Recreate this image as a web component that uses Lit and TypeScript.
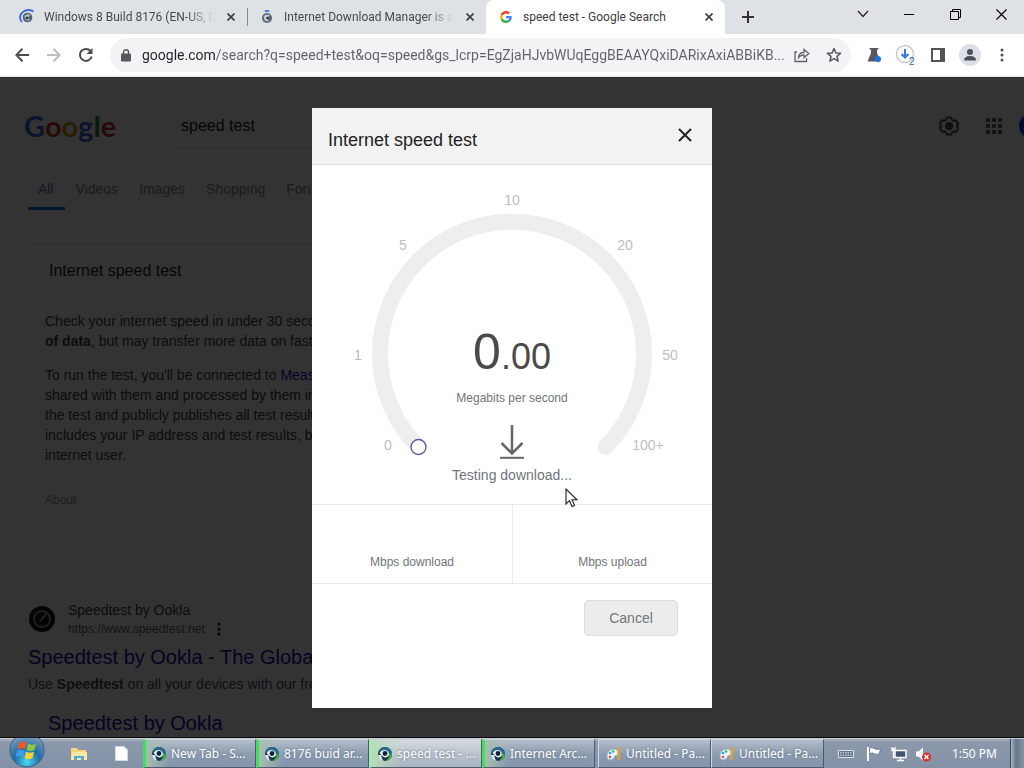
import { LitElement, html, css, svg, nothing } from "lit";
import { customElement, property } from "lit/decorators.js";
import { classMap } from "lit/directives/class-map.js";

const idmIcon = html`<svg width="16" height="16" viewBox="0 0 16 16" aria-hidden="true">
  <path d="M3 13A6.500 6.500 0 0 1 4 3Q8 -0.500 14.500 2.500" fill="none" stroke="#3b74d8" stroke-width="2"/>
  <circle cx="8.500" cy="8.500" r="4.800" fill="#56616e"/>
  <path d="M5.500 7Q8 4 11.500 6L9 8.500L11 11Q8 13 6 10Z" fill="#b9c3cc"/>
  <circle cx="8" cy="9" r="1.500" fill="#2f3a46"/>
</svg>`;

const globeIcon = html`<svg width="16" height="16" viewBox="0 0 16 16" aria-hidden="true">
  <rect x="5.500" y="1" width="5" height="2" rx="1" fill="#4b82d8"/>
  <circle cx="8" cy="9" r="5" fill="#5a6470"/>
  <path d="M4.500 8Q7 4 11 6.500L8 9L10 12Q7 13 5.500 11Z" fill="#c3cbd3"/>
  <circle cx="8.500" cy="9" r="1.300" fill="#2f3a46"/>
</svg>`;

const googleIcon = html`<svg width="12" height="12" viewBox="0 0 48 48" aria-hidden="true">
  <path fill="#ea4335" d="M24 9.500c3.540 0 6.710 1.220 9.210 3.600l6.850-6.850C35.900 2.380 30.470 0 24 0 14.620 0 6.510 5.380 2.560 13.220l7.980 6.190C12.430 13.720 17.740 9.500 24 9.500z"/>
  <path fill="#4285f4" d="M46.980 24.550c0-1.570-.15-3.090-.38-4.550H24v9.020h12.940c-.58 2.960-2.260 5.480-4.780 7.180l7.730 6c4.510-4.180 7.090-10.360 7.090-17.650z"/>
  <path fill="#fbbc05" d="M10.530 28.590c-.48-1.450-.76-2.990-.76-4.590s.27-3.140.76-4.590l-7.980-6.190C.92 16.460 0 20.120 0 24c0 3.880.92 7.540 2.560 10.780l7.970-6.190z"/>
  <path fill="#34a853" d="M24 48c6.480 0 11.930-2.130 15.890-5.810l-7.730-6c-2.150 1.450-4.920 2.300-8.160 2.300-6.260 0-11.570-4.220-13.470-9.910l-7.980 6.190C6.510 42.620 14.620 48 24 48z"/>
</svg>`;

const swirlIcon = html`<svg width="16" height="16" viewBox="0 0 16 16" aria-hidden="true">
  <circle cx="8" cy="8" r="7" fill="#17364a"/>
  <path d="M8 1A7 7 0 0 0 1 8Q2 5 6 5Q12 6 12 12L14 11.500A7 7 0 0 0 8 1Z" fill="#2c6a8f"/>
  <path d="M1 9A7 7 0 0 0 7 15Q4 12.500 4.500 9Z" fill="#dfeaf0"/>
  <path d="M15 8.500A7 7 0 0 1 8 15Q13 12 12 7.500Z" fill="#3fae3a"/>
  <path d="M2.500 7Q5 3 9.500 4.500Q13 6.500 11.500 10Q8.500 12.500 6 10.500Q4 8.500 2.500 7Z" fill="#e8f1f5"/>
  <circle cx="8" cy="7.500" r="2.400" fill="#112233"/>
</svg>`;

const paintIcon = html`<svg width="16" height="16" viewBox="0 0 16 16" aria-hidden="true">
  <path d="M1 12Q0 4 7 3Q13 3 12 8Q11 10 9 10Q8 13 5 14Q2 14 1 12Z" fill="#e9f2f8" stroke="#8fb3cb" stroke-width="1"/>
  <circle cx="4" cy="7" r="1.300" fill="#3a9bdc"/><circle cx="7" cy="5.500" r="1.300" fill="#4db052"/>
  <circle cx="4" cy="11" r="1.300" fill="#dd4b3a"/>
  <path d="M12 1L14.500 1.500L13.500 14L11.500 14Z" fill="#e6a02c"/>
</svg>`;

@customElement("browser-tab")
export class BrowserTab extends LitElement {
  @property() label = "";
  @property({ type: Boolean, reflect: true }) active = false;
  @property({ attribute: false }) icon: unknown = nothing;

  static styles = css`
    :host { display: block; min-width: 0; }
    .tab {
      box-sizing: border-box; height: 34px; display: flex; align-items: center;
      padding: 0 7px 0 18px; gap: 8px; color: #45494e;
      font: 12px/16px Roboto, sans-serif;
    }
    .tab.active { background: #fff; border-radius: 8px 8px 0 0; padding-left: 11px; color: #3c4043; }
    .mark { display: grid; place-items: center; width: 18px; height: 16px; flex: none; }
    .label { flex: 1; min-width: 0; overflow: hidden; white-space: nowrap; }
    .label.faded { mask-image: linear-gradient(to right, #000 calc(100% - 28px), transparent); }
    .close { border: 0; background: none; padding: 0; width: 18px; height: 18px; display: grid; place-items: center; flex: none; }
  `;

  render() {
    return html`<div class=${classMap({ tab: true, active: this.active })}>
      <span class="mark">${this.icon}</span>
      <span class=${classMap({ label: true, faded: !this.active })}>${this.label}</span>
      <button class="close" aria-label="Close tab">
        <svg width="8" height="8" viewBox="0 0 8 8"><path d="M.5.5l7 7M7.500.5l-7 7" stroke="#3c4043" stroke-width="1.700"/></svg>
      </button>
    </div>`;
  }
}

@customElement("task-button")
export class TaskButton extends LitElement {
  @property() label = "";
  @property() kind = "plain";
  @property({ attribute: false }) icon: unknown = nothing;

  static styles = css`
    :host { display: block; width: 113px; flex: 0 1 auto; min-width: 0; }
    .task {
      box-sizing: border-box; width: 100%; height: 29px; display: flex; align-items: center; gap: 4px;
      padding: 0 0 0 7px; border: 1px solid #4d5b6c; border-top-color: #c9d1da; border-left-color: #d3dae2;
      background: linear-gradient(#b3bdc9, #8c9bb0 55%, #8494aa);
      color: #fff; font: 12px/16px "Noto Sans", sans-serif; text-align: left;
      text-shadow: 0 0 3px #5f6d80;
    }
    .web { border-left: 3px solid #3fe05a; padding-left: 5px; background: linear-gradient(to right, #a6bfb0, transparent 24px), linear-gradient(#b3bdc9, #8c9bb0 55%, #8494aa); }
    .current { background: linear-gradient(to right, #b5dcb9, transparent 30px), linear-gradient(#d5dae0, #bcc4ce 50%, #aab4c0); border-left-color: #a3ecb0; }
    .label { min-width: 0; overflow: hidden; white-space: nowrap; }
    svg { flex: none; display: block; }
    .mark { flex: none; }
  `;

  render() {
    return html`<button class=${classMap({ task: true, web: this.kind !== "plain", current: this.kind === "current" })}>
      <span class="mark">${this.icon}</span><span class="label">${this.label}</span>
    </button>`;
  }
}

@customElement("search-page")
export class SearchPage extends LitElement {
  static styles = css`
    :host { display: block; background: #fff; font-family: "Liberation Sans", Arial, sans-serif; color: #4d5156; }
    .top { display: flex; align-items: center; height: 77px; padding: 21px 0 0 24px; box-sizing: border-box; }
    .logo { width: 151px; font: 29px/40px Lato, sans-serif; font-weight: 700; text-decoration: none; }
    .b { color: #3d66d8; } .r { color: #c8352a; } .y { color: #c9920a; } .g { color: #2a8a45; }
    .query {
      flex: 0 1 520px; box-sizing: border-box; height: 46px; padding: 0 6px; border: 0; border-bottom: 1px solid #e8e8e8;
      font: 16px/20px "Liberation Sans", Arial, sans-serif; color: #202124; background: none; outline: none;
    }
    .tools { margin-left: auto; display: flex; align-items: center; gap: 26px; margin-right: -12px; }
    .tools button { border: 0; background: none; padding: 0; display: grid; }
    .avatar { width: 17px; height: 24px; margin-left: -10px; border-radius: 12px 0 0 12px; background: #0b3dff; }
    .kinds { display: flex; padding: 25px 0 0 28px; font-size: 14px; line-height: 20px; }
    .kinds a { padding: 0 11px 8px; color: #80858a; text-decoration: none; border-bottom: 3px solid transparent; }
    .kinds a:first-child { padding-left: 10px; }
    .kinds a + a { padding-right: 10px; }
    .kinds a.on { color: #716cae; border-bottom-color: #1a73e8; }
    .card { margin: 33px 0 0 32px; width: 620px; border: 1px solid #e8e8e8; border-width: 1px 0; }
    .card h2 { margin: 0; padding: 16px 17px; font-size: 16px; line-height: 22px; font-weight: 400; color: #202124; border-bottom: 1px solid #ebebeb; }
    .card p { margin: 0; padding: 0 13px 14px; font-size: 14px; line-height: 20px; white-space: nowrap; color: #3c4043; }
    .card h2 + p { padding-top: 12px; }
    .card a { color: #1a0dab; text-decoration: none; }
    .foot { padding: 13px 13px 25px; font-size: 12px; line-height: 16px; color: #909498; }
    .hit { padding: 66px 0 0 28px; }
    .site { display: flex; align-items: center; gap: 12px; }
    .site svg { flex: none; display: block; }
    .name { font-size: 14px; line-height: 20px; color: #3c4043; }
    .url { display: flex; align-items: center; gap: 12px; font-size: 12px; line-height: 18px; color: #5f6368; }
    h3 { margin: 5px 0 0; font-size: 20px; line-height: 28px; font-weight: 400; color: #1a0dab; }
    h3 a { color: #1a0dab; text-decoration: none; }
    .snip { margin: 2px 0 0; font-size: 14px; line-height: 22px; white-space: nowrap; }
    h3.sub { margin: 14px 0 0 20px; }
  `;

  render() {
    return html`
      <div class="top">
        <a class="logo" href="#" aria-label="Google"><span class="b">G</span><span class="r">o</span><span class="y">o</span><span class="b">g</span><span class="g">l</span><span class="r">e</span></a>
        <input class="query" aria-label="Search" .value=${"speed test"}>
        <div class="tools">
          <button aria-label="Settings"><svg width="20" height="20" viewBox="0 0 20 20" fill="none" stroke="#4a4d50" stroke-width="2">
            <path d="M7.800 1.500h4.400l.8 2.300 1.800 1 2.300-.5 2.100 3.700-1.500 2 1.500 2-2.100 3.700-2.300-.5-1.800 1-.8 2.300H7.800L7 16.200l-1.800-1-2.300.5L.8 12l1.500-2L.8 8l2.100-3.700 2.300.5 1.800-1z"/><circle cx="10" cy="10" r="3" fill="#4a4d50"/></svg></button>
          <button aria-label="Google apps"><svg width="18" height="18" viewBox="0 0 18 18" fill="#5c6064">
            ${[1, 7, 13].map((y) => [1, 7, 13].map((x) => svg`<rect x=${x} y=${y} width="4" height="4" rx="1"/>`))}</svg></button>
          <span class="avatar"></span>
        </div>
      </div>
      <nav class="kinds"><a class="on" href="#">All</a><a href="#">Videos</a><a href="#">Images</a><a href="#">Shopping</a><a href="#">Forums</a></nav>
      <section class="card">
        <h2>Internet speed test</h2>
        <p>Check your internet speed in under 30 seconds. The speed test usually transfers <b>less than 40 MB</b><br><b>of data</b>, but may transfer more data on fast connections.</p>
        <p>To run the test, you'll be connected to <a href="#">Measurement Lab (M-Lab)</a> and your IP address will be<br>shared with them and processed by them in accordance with their privacy policy. M-Lab conducts<br>the test and publicly publishes all test results to promote internet research. Published information<br>includes your IP address and test results, but doesn't include any other information about you as an<br>internet user.</p>
        <div class="foot">About</div>
      </section>
      <article class="hit">
        <div class="site">
          <svg width="28" height="28" viewBox="0 0 28 28"><circle cx="14" cy="14" r="13" fill="#141526"/><circle cx="14" cy="14" r="8" fill="none" stroke="#999" stroke-width="2"/><path d="M12 16l6-7" stroke="#999" stroke-width="2"/></svg>
          <div>
            <div class="name">Speedtest by Ookla</div>
            <div class="url"><span>https://www.speedtest.net</span><svg width="4" height="14" viewBox="0 0 4 14" fill="#202124"><circle cx="2" cy="2" r="1.600"/><circle cx="2" cy="7" r="1.600"/><circle cx="2" cy="12" r="1.600"/></svg></div>
          </div>
        </div>
        <h3><a href="#">Speedtest by Ookla - The Global Broadband Speed Test</a></h3>
        <p class="snip">Use <b>Speedtest</b> on all your devices with our free desktop and mobile apps.</p>
        <h3 class="sub"><a href="#">Speedtest by Ookla</a></h3>
      </article>`;
  }
}

@customElement("speed-dialog")
export class SpeedDialog extends LitElement {
  static styles = css`
    :host { display: block; width: 400px; max-width: 100%; font-family: "Liberation Sans", Arial, sans-serif; }
    .dialog { background: #fff; padding-bottom: 72px; color: #70757a; }
    header { box-sizing: border-box; height: 57px; display: flex; align-items: center; justify-content: space-between; padding: 8px 16px 0; background: #f2f2f2; border-bottom: 1px solid #dcdcdc; }
    h1 { margin: 0; font-size: 18px; line-height: 24px; font-weight: 400; color: #222; }
    .x { border: 0; background: none; padding: 0 4px 10px; display: grid; }
    .gauge { display: grid; height: 339px; }
    .dial { grid-area: 1 / 1; width: 100%; height: 339px; }
    .dial text { font-size: 14px; fill: #bdbdbd; text-anchor: middle; }
    .read { grid-area: 1 / 1; display: flex; flex-direction: column; align-items: center; padding-top: 158px; }
    .num { font-size: 50px; line-height: 58px; color: #4a4a4a; }
    .num small { font-size: 36px; }
    .unit { margin-top: 3px; font-size: 12px; line-height: 18px; }
    .read svg { margin: 18px 0 5px; display: block; }
    .state { font-size: 14px; line-height: 22px; }
    .stats { display: grid; grid-template-columns: 1fr 1fr; border: 1px solid #ebebeb; border-width: 1px 0; }
    .stats div { height: 78px; box-sizing: border-box; padding-bottom: 12px; display: flex; align-items: flex-end; justify-content: center; font-size: 12px; line-height: 18px; }
    .stats div + div { border-left: 1px solid #ebebeb; }
    footer { display: flex; justify-content: flex-end; padding: 16px 34px 0; }
    .cancel { width: 94px; height: 36px; border: 1px solid #dcdcdc; border-radius: 5px; background: #ececec; color: #70757a; font: 14px/20px "Liberation Sans", Arial, sans-serif; }
  `;

  private marks: [string, number, number][] = [
    ["0", 76, 285], ["1", 46, 195], ["5", 91, 85], ["10", 200, 40], ["20", 313, 85], ["50", 358, 195], ["100+", 336, 285],
  ];

  render() {
    return html`<div class="dialog" role="dialog" aria-label="Internet speed test">
      <header>
        <h1>Internet speed test</h1>
        <button class="x" aria-label="Close"><svg width="14" height="14" viewBox="0 0 14 14"><path d="M1 1l12 12M13 1L1 13" stroke="#222" stroke-width="2"/></svg></button>
      </header>
      <div class="gauge">
        <svg class="dial" viewBox="0 0 400 339">
          <path d="M106.500 282A132 132 0 1 1 293.500 282" fill="none" stroke="#eeeeee" stroke-width="16" stroke-linecap="round"/>
          <circle cx="106.500" cy="282" r="7.500" fill="#fff" stroke="#5b55a8" stroke-width="1.300"/>
          ${this.marks.map(([t, x, y]) => svg`<text x=${x} y=${y}>${t}</text>`)}
        </svg>
        <div class="read">
          <div class="num">0<small>.00</small></div>
          <div class="unit">Megabits per second</div>
          <svg width="24" height="34" viewBox="0 0 24 34" fill="none" stroke="#666" stroke-width="2.500"><path d="M12 0v29M1.500 18L12 28.500 22.500 18"/><path d="M0 32.800h24" stroke-width="2"/></svg>
          <div class="state">Testing download...</div>
        </div>
      </div>
      <div class="stats"><div>Mbps download</div><div>Mbps upload</div></div>
      <footer><button class="cancel">Cancel</button></footer>
    </div>`;
  }
}

@customElement("app-root")
export class AppRoot extends LitElement {
  static styles = css`
    :host { display: grid; grid-template-rows: auto auto minmax(0, 1fr) auto; height: 100vh; overflow: hidden; position: relative; font-family: "Noto Sans", sans-serif; background: #333; }
    button { border: 0; background: none; padding: 0; display: grid; place-items: center; }
    svg { display: block; }
    .strip { display: flex; align-items: center; height: 34px; background: #dee1e6; }
    .tab { flex: 0 1 247px; min-width: 0; }
    .tab.second { flex-basis: 239px; border-left: 1px solid #85898f; height: 18px; display: flex; align-items: center; box-sizing: border-box; }
    .tab.second browser-tab { flex: 1; margin-left: -8px; }
    .tab.third { flex-basis: 239px; }
    .plus { width: 46px; height: 34px; }
    .controls { margin-left: auto; display: flex; align-self: flex-start; }
    .controls button { width: 46px; height: 28px; }
    .bar { display: flex; align-items: center; height: 43px; background: #fff; padding: 0 6px; border-bottom: 1px solid #dfe3e3; box-sizing: border-box; }
    .nav { width: 32px; height: 32px; }
    .omni { flex: 1; min-width: 0; display: flex; align-items: center; height: 34px; border-radius: 17px; background: #f1f3f4; margin: 0 7px 0 8px; padding: 0 1px 0 11px; }
    .url { flex: 1; min-width: 0; margin-left: 11px; border: 0; padding: 0; outline: none; height: 22px; font: 14px/22px Roboto, sans-serif; color: #5f6368; background: linear-gradient(to right, #202124 73px, #5f6368 73px); background-clip: text; -webkit-text-fill-color: transparent; text-overflow: ellipsis; }
    .act { width: 32px; height: 32px; flex: none; }
    .me { width: 22px; height: 22px; border-radius: 50%; background: #dcdfe6; }
    .view { position: relative; overflow: hidden; min-height: 0; }
    .shade { position: absolute; inset: 0; display: grid; justify-items: center; align-content: center; background: rgba(0, 0, 0, 0.8); }
    .pointer { position: absolute; left: 565px; top: 488px; }
    .tasks { display: flex; align-items: center; height: 30px; box-sizing: border-box; padding-left: 9px; background: linear-gradient(#a8b2c0 0, #8c99ad 3px, #8391a6); border-top: 1px solid #c6ccd4; }
    .start { width: 36px; height: 29px; margin-right: 13px; }
    .start svg { margin-top: -8px; }
    .pin { width: 42px; height: 29px; }
    .set { display: flex; min-width: 0; margin-left: 1px; }
    .set + .set { margin-left: 3px; }
    .tray { margin-left: auto; display: flex; align-items: center; gap: 8px; }
    .keys { margin-right: 3px; }
    .clock { color: #fff; font-size: 12px; line-height: 16px; margin: 0 5px 0 12px; white-space: nowrap; }
    .desk { width: 14px; height: 29px; border-left: 1px solid #3d4a5a; background: linear-gradient(to right, #aab5c2, #66758a 5px, #8593a6); box-sizing: border-box; }
  `;

  render() {
    return html`
      <div class="strip">
        <browser-tab class="tab" label="Windows 8 Build 8176 (EN-US, DE-DE)" .icon=${idmIcon}></browser-tab>
        <div class="tab second"><browser-tab label="Internet Download Manager is asking" .icon=${globeIcon}></browser-tab></div>
        <browser-tab class="tab third" active label="speed test - Google Search" .icon=${googleIcon}></browser-tab>
        <button class="plus" aria-label="New tab"><svg width="12" height="12" viewBox="0 0 12 12"><path d="M6 0v12M0 6h12" stroke="#333" stroke-width="2"/></svg></button>
        <div class="controls">
          <button aria-label="Search tabs"><svg width="12" height="8" viewBox="0 0 12 8"><path d="M1 1l5 5.500L11 1" fill="none" stroke="#222" stroke-width="1.200"/></svg></button>
          <button aria-label="Minimize"><svg width="10" height="10" viewBox="0 0 10 10"><path d="M0 5.500h10" stroke="#000"/></svg></button>
          <button aria-label="Restore"><svg width="11" height="11" viewBox="0 0 11 11" fill="none" stroke="#000"><path d="M.5 2.500h8v8h-8zM2.500 2.500v-2h8v8h-2"/></svg></button>
          <button aria-label="Close"><svg width="11" height="11" viewBox="0 0 11 11"><path d="M.5.5l10 10M10.500.5l-10 10" stroke="#000" stroke-width="1.200"/></svg></button>
        </div>
      </div>
      <div class="bar">
        <button class="nav" aria-label="Back"><svg width="14" height="14" viewBox="0 0 14 14" fill="none" stroke="#4a4d51" stroke-width="2"><path d="M14 7H1.500M7.500.8L1.300 7l6.200 6.200"/></svg></button>
        <button class="nav" aria-label="Forward"><svg width="14" height="14" viewBox="0 0 14 14" fill="none" stroke="#bcbfc2" stroke-width="2"><path d="M0 7h12.500M6.500.8L12.700 7l-6.200 6.200"/></svg></button>
        <button class="nav" aria-label="Reload"><svg width="16" height="16" viewBox="0 0 16 16"><path d="M13.700 9.500A6 6 0 1 1 12.500 4" fill="none" stroke="#4a4d51" stroke-width="2"/><path d="M14.500 1v6h-6z" fill="#4a4d51"/></svg></button>
        <div class="omni">
          <svg width="10" height="13" viewBox="0 0 10 13"><rect y="4.500" width="10" height="8" rx="1" fill="#54585c"/><path d="M2.500 5V3.300a2.500 2.500 0 0 1 5 0V5" fill="none" stroke="#54585c" stroke-width="1.400"/></svg>
          <input class="url" aria-label="Address" .value=${"google.com/search?q=speed+test&oq=speed&gs_lcrp=EgZjaHJvbWUqEggBEAAYQxiDARixAxiABBiKB..."}>
          <button class="act" aria-label="Share"><svg width="16" height="16" viewBox="0 0 16 16" fill="none" stroke="#5f6368" stroke-width="1.300"><path d="M3 5H1v9.500h11.500V11M4.500 10.500Q5 5.500 10 5.500V2.500L14.800 6.500 10 10.500V8Q6.500 8 4.500 10.500Z"/></svg></button>
          <button class="act" aria-label="Bookmark"><svg width="16" height="16" viewBox="0 0 16 16"><path d="M8 1.500l1.900 4.400 4.700.4-3.600 3.100 1.100 4.700L8 11.600l-4.100 2.500L5 9.400 1.400 6.300l4.700-.4z" fill="none" stroke="#54585c" stroke-width="1.500" stroke-linejoin="round"/></svg></button>
        </div>
        <button class="act" aria-label="Experiments"><svg width="16" height="16" viewBox="0 0 16 16"><path d="M3.500 1h9v1.500H11V6l3.500 8.500h-13L5 6V2.500H3.500z" fill="#55595d"/><circle cx="12" cy="12" r="3" fill="#1a73e8"/></svg></button>
        <button class="act" aria-label="Download manager"><svg width="22" height="22" viewBox="0 0 22 22"><circle cx="10" cy="10" r="8.500" fill="#fff" stroke="#c3cad6" stroke-width="1.500"/><path d="M10 5v8M6.500 10l3.500 3.500 3.500-3.500" fill="none" stroke="#2f78e0" stroke-width="2"/><text x="14" y="21" font-size="10" fill="#3a5f98" font-family="Liberation Sans">2</text></svg></button>
        <button class="act" aria-label="Side panel"><svg width="14" height="14" viewBox="0 0 14 14"><path d="M1 1h12v12H1z" fill="none" stroke="#505458" stroke-width="2"/><path d="M9 1h4v12H9z" fill="#505458"/></svg></button>
        <button class="act" aria-label="Profile"><span class="me"><svg width="22" height="22" viewBox="0 0 22 22" fill="#4d5156"><circle cx="11" cy="8" r="3"/><path d="M5 16.500Q5 12 11 12T17 16.500z"/></svg></span></button>
        <button class="act" aria-label="Menu"><svg width="4" height="14" viewBox="0 0 4 14" fill="#4d5156"><circle cx="2" cy="2" r="1.500"/><circle cx="2" cy="7" r="1.500"/><circle cx="2" cy="12" r="1.500"/></svg></button>
      </div>
      <div class="view">
        <search-page></search-page>
        <div class="shade"><speed-dialog></speed-dialog></div>
      </div>
      <div class="tasks">
        <button class="start" aria-label="Start"><svg width="36" height="36" viewBox="0 0 36 36">
          <defs><radialGradient id="orb" cx=".5" cy=".85" r=".85"><stop offset="0" stop-color="#4fd8f5"/><stop offset=".45" stop-color="#1c6da6"/><stop offset="1" stop-color="#8fa6bd"/></radialGradient></defs>
          <circle cx="18" cy="18" r="17" fill="url(#orb)" stroke="#3e5d7c"/>
          <path d="M10 11Q14 8 17.500 11L16 17.500Q12.500 15 8.500 17.500Z" fill="#f0572a"/><path d="M19 11.500Q23 14 27 11.500L25.500 18Q21.500 20 17.500 18Z" fill="#8cc63e"/>
          <path d="M8 19Q12 16.500 15.700 19L14 25.500Q10.500 23 6.500 25Z" fill="#3c9fe8"/><path d="M17 19.500Q21 22 25 19.500L23.500 26Q19.500 28.500 15.500 26Z" fill="#fbd13a"/></svg></button>
        <button class="pin" aria-label="Explorer"><svg width="18" height="14" viewBox="0 0 18 14"><path d="M1 1h6l1.500 2H16v10H1z" fill="#f3d67c"/><path d="M3 5h14v8H1z" fill="#fbe9ac"/><path d="M4 13V9h10v4h-3v-2H7v2z" fill="#58a9cf"/></svg></button>
        <button class="pin" aria-label="Document"><svg width="13" height="15" viewBox="0 0 13 15"><path d="M.5.5h8.500l3.500 3.500v10.500H.5z" fill="#fdfdfb" stroke="#d5dae0"/></svg></button>
        <div class="set">
          <task-button kind="web" label="New Tab - S..." .icon=${swirlIcon}></task-button>
          <task-button kind="web" label="8176 buid ar..." .icon=${swirlIcon}></task-button>
          <task-button kind="current" label="speed test - ..." .icon=${swirlIcon}></task-button>
          <task-button kind="web" label="Internet Arc..." .icon=${swirlIcon}></task-button>
        </div>
        <div class="set">
          <task-button label="Untitled - Pa..." .icon=${paintIcon}></task-button>
          <task-button label="Untitled - Pa..." .icon=${paintIcon}></task-button>
        </div>
        <div class="tray">
          <svg class="keys" width="16" height="8" viewBox="0 0 16 8"><path d="M.5.5h15v7H.5z" fill="#66748a" stroke="#dde2e8"/><path d="M2 2.800h12M2 5.200h12" stroke="#e8ecf0" stroke-dasharray="1.500 1"/></svg>
          <svg width="18" height="16" viewBox="0 0 18 16"><path d="M3 1v14" stroke="#fff" stroke-width="2"/><path d="M4.500 2Q7 1 9 2.500T15.500 3L14 8Q11 9 9 7.500T4.500 8Z" fill="#fff" stroke="#4b596c" stroke-width=".6"/></svg>
          <svg width="16" height="16" viewBox="0 0 16 16"><path d="M4 4.500h11v7H4z" fill="#42546c" stroke="#fff" stroke-width="1.500"/><path d="M9.500 12v2M6 14.500h7M2.500 2v10M1 1v3.500h3V1" fill="none" stroke="#fff" stroke-width="1.300"/></svg>
          <svg width="17" height="16" viewBox="0 0 17 16"><path d="M1 5.500h2.500L8 1.500v13L3.500 10.500H1z" fill="#fff"/><circle cx="11.500" cy="11" r="4.500" fill="#d8322a"/><path d="M9.500 9l4 4M13.500 9l-4 4" stroke="#fff" stroke-width="1.500"/></svg>
          <span class="clock">1:50 PM</span>
          <span class="desk"></span>
        </div>
      </div>
      <svg class="pointer" width="14" height="20" viewBox="0 0 14 20"><path d="M1 1v15l3.500-3.300 2.500 5.800 2.500-1-2.400-5.700H12z" fill="#fff" stroke="#222" stroke-width="1.100"/></svg>
    `;
  }
}
